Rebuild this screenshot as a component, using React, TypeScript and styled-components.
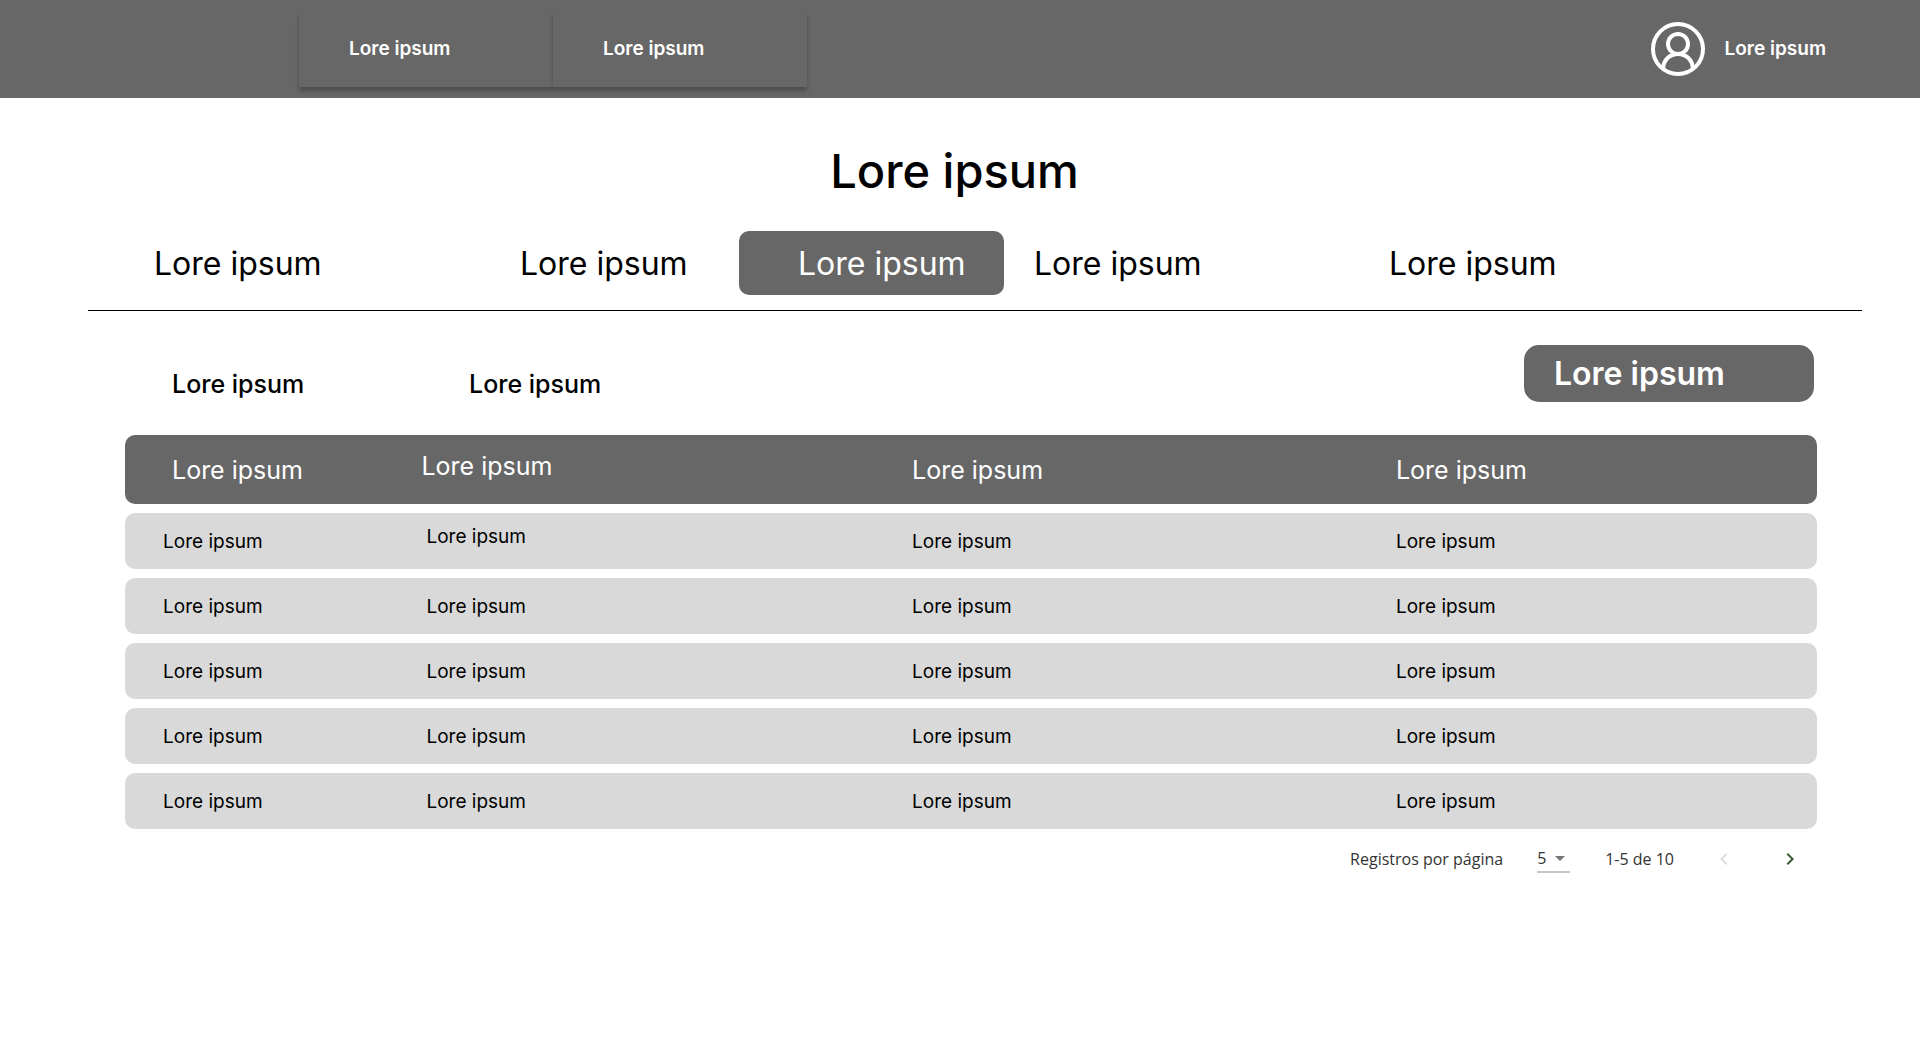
import React from 'react';
import styled, { createGlobalStyle } from 'styled-components';

const gray = '#676767';

const GlobalStyle = createGlobalStyle`
  *, *::before, *::after { box-sizing: border-box; }
  body {
    margin: 0;
    background: #fff;
    color: #000;
    font-family: Inter, 'Liberation Sans', sans-serif;
  }
  button, select { font-family: inherit; }
  a { color: inherit; text-decoration: none; }
`;

const TopBar = styled.header`
  display: flex;
  align-items: center;
  justify-content: space-between;
  height: 98px;
  padding: 0 94px 0 299px;
  background: ${gray};
  color: #fff;
  font-size: 19px;
  font-weight: 600;
  line-height: 24px;
`;

const TopNav = styled.nav`
  display: flex;
`;

const TopNavLink = styled.a`
  display: flex;
  align-items: center;
  width: 254px;
  height: 76px;
  padding-left: 50px;
  background: ${gray};
  box-shadow: 0 4px 4px rgba(0, 0, 0, 0.25);
`;

const UserLink = styled.a`
  display: flex;
  align-items: center;
  gap: 20px;
`;

const Main = styled.main`
  padding: 45px 58px 0 88px;
`;

const Title = styled.h1`
  margin: 0 41px 32px 0;
  font-size: 47px;
  font-weight: 500;
  line-height: 56px;
  text-align: center;
`;

const Tabs = styled.nav`
  display: grid;
  grid-template-columns: 366fr 285fr 265fr 319fr 539fr;
  padding-bottom: 15px;
  border-bottom: 1px solid #000;
`;

const Tab = styled.a<{ $active?: boolean; $indent: number }>`
  display: flex;
  align-items: center;
  height: 64px;
  padding-left: ${(p) => p.$indent}px;
  border-radius: 10px;
  font-size: 32px;
  white-space: nowrap;
  background: ${(p) => (p.$active ? gray : 'transparent')};
  color: ${(p) => (p.$active ? '#fff' : '#000')};
`;

const Section = styled.section`
  margin: 34px 45px 0 37px;
`;

const Toolbar = styled.div`
  display: flex;
  align-items: flex-end;
  padding: 0 3px 0 47px;
  margin-bottom: 24px;
`;

const ToolbarLabel = styled.h2`
  width: 297px;
  margin: 0;
  font-size: 25px;
  font-weight: 500;
  line-height: 36px;
`;

const PrimaryButton = styled.button`
  width: 290px;
  height: 57px;
  margin-left: auto;
  padding: 0 30px;
  border: 0;
  border-radius: 15px;
  background: ${gray};
  color: #fff;
  font-size: 32px;
  font-weight: 600;
  text-align: left;
`;

const Table = styled.table`
  width: 100%;
  table-layout: fixed;
  border-collapse: separate;
  border-spacing: 0 9px;

  th, td {
    text-align: left;
    vertical-align: middle;
  }
  th:first-child, td:first-child { border-radius: 10px 0 0 10px; }
  th:last-child, td:last-child { border-radius: 0 10px 10px 0; }
`;

const Col = styled.col<{ $width?: string }>`
  width: ${(p) => p.$width ?? 'auto'};
`;

const HeadCell = styled.th<{ $raised?: boolean }>`
  height: 69px;
  padding: 0 0 ${(p) => (p.$raised ? 8 : 0)}px 46px;
  background: ${gray};
  color: #fff;
  font-size: 25px;
  font-weight: 400;

  &:first-child { padding-left: 47px; }
`;

const Cell = styled.td<{ $raised?: boolean }>`
  height: 56px;
  padding: 0 0 ${(p) => (p.$raised ? 10 : 0)}px 46px;
  background: #d9d9d9;
  font-size: 19px;

  &:first-child { padding-left: 38px; }
  &:nth-child(2) { padding-left: 51px; }
`;

const Pagination = styled.div`
  display: flex;
  align-items: center;
  justify-content: flex-end;
  height: 42px;
  padding-right: 7px;
  color: #333;
  font-family: 'Open Sans', 'Noto Sans', sans-serif;
  font-size: 16px;
`;

const SelectBox = styled.span`
  display: grid;
  align-items: center;
  width: 33px;
  height: 28px;
  margin: 0 35px 0 34px;
  border-bottom: 2px solid #c6c6c6;

  > * { grid-area: 1 / 1; }
  > svg {
    justify-self: end;
    margin-right: 5px;
    pointer-events: none;
  }
`;

const Select = styled.select`
  appearance: none;
  width: 100%;
  height: 26px;
  padding: 0;
  border: 0;
  background: transparent;
  color: inherit;
  font-size: 16px;
`;

const PageButtons = styled.span`
  display: flex;
  gap: 26px;
  margin-left: 30px;
`;

const PageButton = styled.button`
  display: flex;
  padding: 8px;
  border: 0;
  background: transparent;
  color: #3c5a33;

  &:disabled { color: #dcdcdc; }
`;

const UserIcon = () => (
  <svg width="54" height="54" viewBox="0 0 54 54" fill="none" stroke="#fff" strokeWidth="4" aria-hidden="true">
    <circle cx="27" cy="27" r="25" />
    <circle cx="27" cy="22" r="10" />
    <path d="M12.2 46.5C12.4 38 18.8 32 27 32s14.6 6 14.8 14.5" />
  </svg>
);

const text = 'Lore ipsum';
const tabIndents = [66, 66, 59, 30, 66];
const columns = ['14.8%', '29%', '28.6%', undefined];
const rows = [1, 2, 3, 4, 5];

export default function App() {
  return (
    <>
      <GlobalStyle />
      <TopBar>
        <TopNav>
          <TopNavLink href="#">{text}</TopNavLink>
          <TopNavLink href="#">{text}</TopNavLink>
        </TopNav>
        <UserLink href="#">
          <UserIcon />
          {text}
        </UserLink>
      </TopBar>
      <Main>
        <Title>{text}</Title>
        <Tabs>
          {tabIndents.map((indent, i) => (
            <Tab key={i} href="#" $indent={indent} $active={i === 2}>
              {text}
            </Tab>
          ))}
        </Tabs>
        <Section>
          <Toolbar>
            <ToolbarLabel>{text}</ToolbarLabel>
            <ToolbarLabel>{text}</ToolbarLabel>
            <PrimaryButton type="button">{text}</PrimaryButton>
          </Toolbar>
          <Table>
            <colgroup>
              {columns.map((width, i) => (
                <Col key={i} $width={width} />
              ))}
            </colgroup>
            <thead>
              <tr>
                {columns.map((_, i) => (
                  <HeadCell key={i} scope="col" $raised={i === 1}>
                    {text}
                  </HeadCell>
                ))}
              </tr>
            </thead>
            <tbody>
              {rows.map((row) => (
                <tr key={row}>
                  {columns.map((_, i) => (
                    <Cell key={i} $raised={row === 1 && i === 1}>
                      {text}
                    </Cell>
                  ))}
                </tr>
              ))}
            </tbody>
          </Table>
          <Pagination>
            <label htmlFor="page-size">Registros por página</label>
            <SelectBox>
              <Select id="page-size" defaultValue="5">
                <option>5</option>
                <option>10</option>
              </Select>
              <svg width="10" height="5" viewBox="0 0 10 5" aria-hidden="true">
                <path d="M0 0h10L5 5z" fill="#757575" />
              </svg>
            </SelectBox>
            <span>1-5 de 10</span>
            <PageButtons>
              <PageButton type="button" aria-label="Página anterior" disabled>
                <svg width="24" height="24" viewBox="0 0 24 24" fill="currentColor">
                  <path d="M15.41 7.41 14 6l-6 6 6 6 1.41-1.41L10.83 12z" />
                </svg>
              </PageButton>
              <PageButton type="button" aria-label="Página siguiente">
                <svg width="24" height="24" viewBox="0 0 24 24" fill="currentColor">
                  <path d="M10 6 8.59 7.41 13.17 12l-4.58 4.59L10 18l6-6z" />
                </svg>
              </PageButton>
            </PageButtons>
          </Pagination>
        </Section>
      </Main>
    </>
  );
}
